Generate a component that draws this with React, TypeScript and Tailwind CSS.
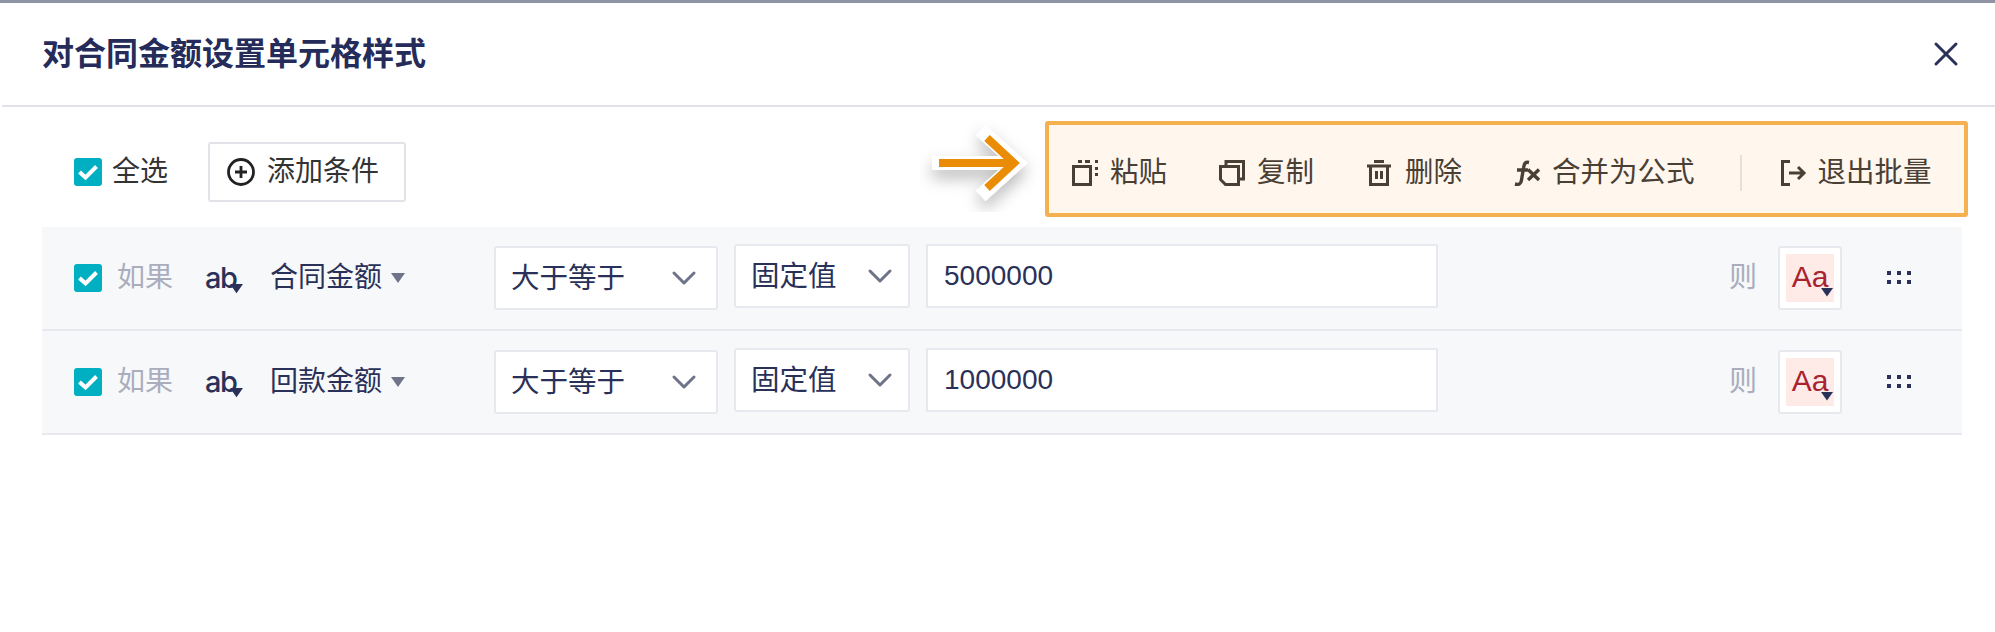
import { ChevronDown, X } from "lucide-react";

const FONT = "font-['Liberation_Sans','Noto_Sans_CJK_SC',sans-serif]";

function Check() {
  return (
    <span className="flex h-[28px] w-[28px] shrink-0 items-center justify-center rounded-[3px] bg-[#00b0c2]">
      <svg width="24" height="24" viewBox="0 0 24 24" fill="none">
        <path d="M3.5 12 L9.5 17.5 L20.5 6.5" stroke="#fff" strokeWidth="4" />
      </svg>
    </span>
  );
}

function Caret({ className, color, size = 14 }: { className: string; color: string; size?: number }) {
  return (
    <svg className={className} width={size} height={(size * 10) / 14} viewBox="0 0 14 10">
      <path d="M0 0 H14 L7 10 Z" fill={color} />
    </svg>
  );
}

function Select({ label, w, extra }: { label: string; w: string; extra: string }) {
  return (
    <div className={`flex h-[64px] items-center justify-between rounded-[3px] border-2 border-[#e8e9ee] bg-white pl-[15px] text-[28.5px] ${w} ${extra}`}>
      <span>{label}</span>
      <ChevronDown size={40} strokeWidth={1.8} className="text-[#6f7389]" />
    </div>
  );
}

function Row({ field, value }: { field: string; value: string }) {
  return (
    <div className="flex h-[104px] items-center border-b-2 border-[#e8e9ee] bg-[#f7f8fa] pl-[32px] text-[28px] text-[#2a3159]">
      <Check />
      <span className="ml-[15px] w-[57px] text-[#a9adbd]">如果</span>
      <span className="relative ml-[31px] w-[35px] font-['Inter',sans-serif] text-[29px] font-medium tracking-[-1.5px]">
        ab
        <Caret className="absolute right-[-3px] bottom-[6px]" color="#2a3159" size={13} />
      </span>
      <span className="ml-[30px]">{field}</span>
      <Caret className="ml-[9px]" color="#6f7389" />
      <Select label="大于等于" w="w-[224px]" extra="ml-[89px] pr-[12px]" />
      <Select label="固定值" w="w-[176px]" extra="ml-[16px] mb-[4px] pr-[8px]" />
      <div className="mb-[4px] ml-[16px] flex h-[64px] w-[512px] items-center border-2 border-[#e8e9ee] bg-white pl-[16px]">
        {value}
      </div>
      <span className="ml-[291px] text-[#a9adbd]">则</span>
      <div className="ml-[21px] flex h-[64px] w-[64px] items-center justify-center rounded-[3px] border-2 border-[#e8e9ee] bg-white">
        <div className="relative flex h-[48px] w-[48px] items-center justify-center bg-[#feebe8] pb-[4px] text-[30px] text-[#a8232e]">
          Aa
          <Caret className="absolute right-[1px] bottom-[5px]" color="#2a3159" size={12} />
        </div>
      </div>
      <svg className="ml-[45px]" width="24" height="14" viewBox="0 0 24 14" fill="#2a3159">
        <rect x="0" y="0" width="4" height="4" />
        <rect x="10" y="0" width="4" height="4" />
        <rect x="20" y="0" width="4" height="4" />
        <rect x="0" y="9" width="4" height="4" />
        <rect x="10" y="9" width="4" height="4" />
        <rect x="20" y="9" width="4" height="4" />
      </svg>
    </div>
  );
}

function ToolItem({ icon, label, gap }: { icon: React.ReactNode; label: string; gap: string }) {
  return (
    <div className={`flex items-center ${gap}`}>
      {icon}
      <span>{label}</span>
    </div>
  );
}

export default function App() {
  return (
    <div className={`h-[632px] w-[1995px] overflow-hidden bg-white ${FONT}`}>
      <div className="h-[3px] bg-[#8e94a3]" />
      <div className="ml-[2px] flex h-[104px] items-center justify-between border-b-2 border-[#e2e2e9] pr-[29px] pl-[40px]">
        <h1 className="text-[32px] font-bold text-[#252c5a]">对合同金额设置单元格样式</h1>
        <X size={40} strokeWidth={1.8} className="text-[#2a3159]" />
      </div>

      <div className="relative flex h-[120px] items-center pt-[10px] pl-[74px] text-[28px] text-[#333]">
        <Check />
        <span className="ml-[10px]">全选</span>
        <div className="ml-[40px] flex h-[60px] w-[198px] items-center gap-[12px] rounded-[3px] border-2 border-[#e2e2e9] pl-[17px]">
          <svg width="28" height="28" viewBox="0 0 28 28" fill="none" stroke="#222" strokeWidth="2.8">
            <circle cx="14" cy="14" r="12.5" />
            <path d="M14 8 V20 M8 14 H20" />
          </svg>
          <span>添加条件</span>
        </div>

        <svg className="absolute top-[13px] left-[920px]" width="120" height="92" viewBox="0 0 120 92" fill="none">
          <defs>
            <filter id="arrowShadow" x="-30%" y="-30%" width="160%" height="170%">
              <feDropShadow dx="0" dy="8" stdDeviation="8" floodColor="#000" floodOpacity="0.28" />
            </filter>
          </defs>
          <g filter="url(#arrowShadow)">
            <path d="M19 43 H90 M66 15 L97 43 L66 71" stroke="#fff" strokeWidth="14" strokeLinecap="square" />
          </g>
          <path d="M19 43 H93 M67 18 L94 43 L67 68" stroke="#ea8c05" strokeWidth="8" />
        </svg>

        <div className="absolute top-[14px] left-[1045px] flex h-[96px] w-[923px] items-center rounded-[3px] border-4 border-[#f5b04f] bg-[#fff6ed] pt-[7px] pl-[23px] text-[28.5px] text-[#4a3f35]">
          <ToolItem
            gap="gap-[12px]"
            label="粘贴"
            icon={
              <svg width="26" height="26" viewBox="0 0 26 26" fill="none" stroke="#4a3f35" strokeWidth="3">
                <rect x="1.5" y="6.5" width="17" height="18" />
                <path d="M6 1.5 H10 M13 1.5 H18 M23 1.5 H26 M24.5 7 V10 M24.5 13 V16" />
              </svg>
            }
          />
          <ToolItem
            gap="gap-[12px] ml-[52px]"
            label="复制"
            icon={
              <svg width="26" height="26" viewBox="0 0 26 26" fill="none" stroke="#4a3f35" strokeWidth="3">
                <path d="M7 6 V1.5 H24.5 V19 H20" />
                <path d="M1.5 6.5 H19.5 V24.5 H6.5 L1.5 19.5 Z" />
              </svg>
            }
          />
          <ToolItem
            gap="gap-[14px] ml-[53px]"
            label="删除"
            icon={
              <svg width="24" height="26" viewBox="0 0 24 26" fill="none" stroke="#4a3f35" strokeWidth="3">
                <path d="M0 6 H24 M7 1.5 H17 M3.5 6 V24.5 H20.5 V6 M9.5 11 V19 M14.5 11 V19" />
              </svg>
            }
          />
          <ToolItem
            gap="gap-[12px] ml-[52px]"
            label="合并为公式"
            icon={
              <svg width="26" height="26" viewBox="0 0 26 26" fill="none" stroke="#4a3f35" strokeWidth="3.4">
                <path d="M15 2.5 C11 1.5 10 4 9.5 8 L7.5 20 C7 24 5 25 1 24 M3 10 H14 M14 9.5 L25 20 M25 9.5 L14 20" />
              </svg>
            }
          />
          <div className="ml-[45px] h-[36px] w-[2px] bg-[#e6e0d8]" />
          <ToolItem
            gap="gap-[11px] ml-[39px]"
            label="退出批量"
            icon={
              <svg width="26" height="26" viewBox="0 0 26 26" fill="none" stroke="#4a3f35" strokeWidth="3">
                <path d="M9 1.5 H1.5 V24.5 H9 M8 13 H23 M17 7 L23 13 L17 19" />
              </svg>
            }
          />
        </div>
      </div>

      <div className="mr-[33px] ml-[42px]">
        <Row field="合同金额" value="5000000" />
        <Row field="回款金额" value="1000000" />
      </div>
    </div>
  );
}
